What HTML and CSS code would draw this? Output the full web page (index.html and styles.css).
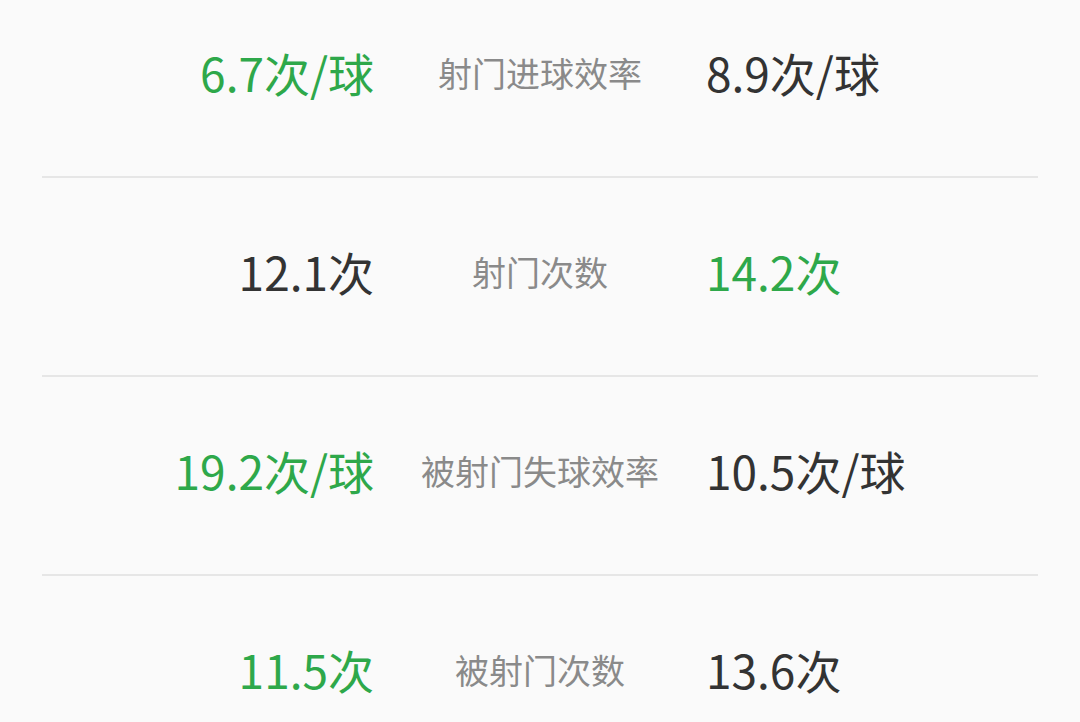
FILE: index.html
```html
<!DOCTYPE html>
<html lang="zh-CN">
<head>
  <meta charset="UTF-8">
  <meta name="viewport" content="width=device-width, initial-scale=1.0">
  <title>数据对比</title>
  <link rel="stylesheet" href="styles.css">
</head>
<body>
  <div class="stats">
    <div class="row">
      <div class="val left win">6.7次/球</div>
      <div class="label">射门进球效率</div>
      <div class="val right">8.9次/球</div>
    </div>
    <div class="row">
      <div class="val left">12.1次</div>
      <div class="label">射门次数</div>
      <div class="val right win">14.2次</div>
    </div>
    <div class="row">
      <div class="val left win">19.2次/球</div>
      <div class="label">被射门失球效率</div>
      <div class="val right">10.5次/球</div>
    </div>
    <div class="row">
      <div class="val left win">11.5次</div>
      <div class="label">被射门次数</div>
      <div class="val right">13.6次</div>
    </div>
  </div>
</body>
</html>
```
FILE: styles.css
```css
html, body {
  margin: 0;
  padding: 0;
  background: #fafafa;
  overflow: hidden;
}
body {
  font-family: "Noto Sans CJK SC", "Noto Sans", sans-serif;
}
.stats {
  margin: -21px 42px 0;
}
.row {
  display: grid;
  grid-template-columns: 1fr 1fr 1fr;
  align-items: center;
  box-sizing: border-box;
  height: 199px;
  padding-bottom: 11px;
  border-bottom: 2px solid #e6e6e6;
}
.val {
  font-size: 46px;
  color: #333;
}
.val.win {
  color: #2ea84a;
}
.left {
  text-align: right;
}
.right {
  text-align: left;
}
.label {
  text-align: center;
  font-size: 34px;
  color: #8a8a8a;
}
```
